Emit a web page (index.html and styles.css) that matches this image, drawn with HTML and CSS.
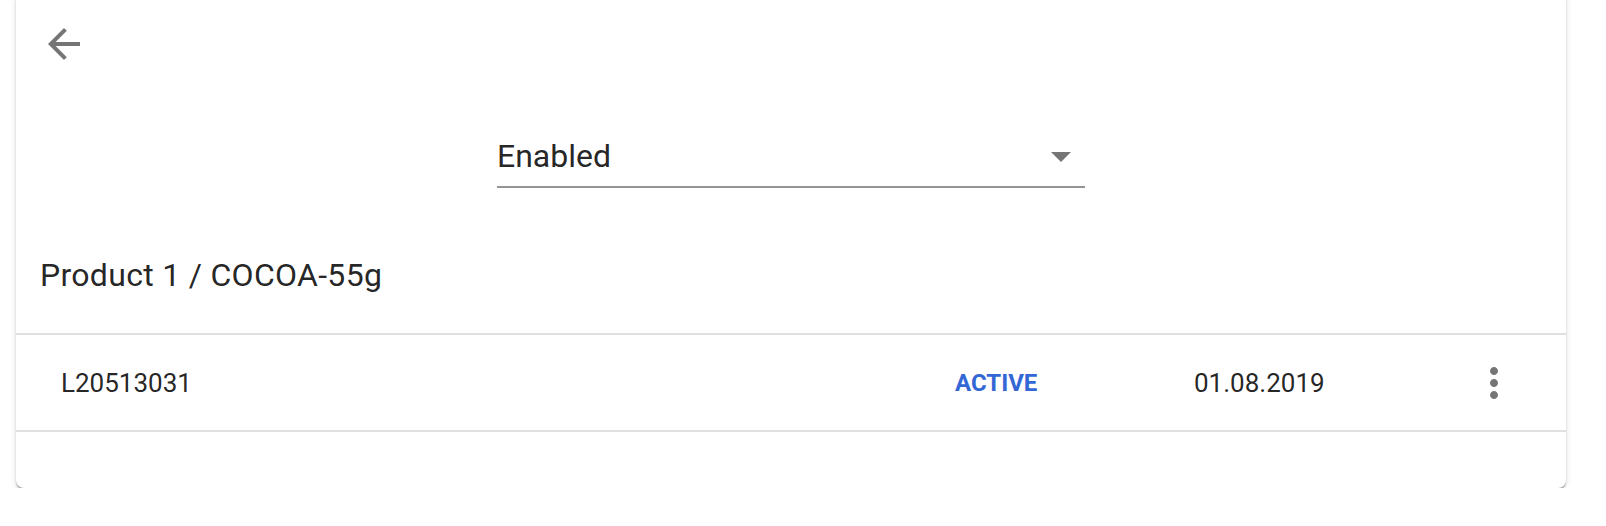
FILE: index.html
```html
<!DOCTYPE html>
<html lang="en">
<head>
<meta charset="utf-8">
<title>Product lots</title>
<link rel="stylesheet" href="styles.css">
</head>
<body>
<div class="page">
  <section class="card">
    <div class="toolbar">
      <button class="icon-btn" aria-label="Back">
        <svg viewBox="0 0 24 24" width="48" height="48"><path d="M20 11H7.83l5.59-5.59L12 4l-8 8 8 8 1.41-1.41L7.83 13H20v-2z"/></svg>
      </button>
    </div>
    <div class="filter">
      <div class="select">
        <span class="select-value">Enabled</span>
        <span class="select-arrow"></span>
      </div>
    </div>
    <h2 class="title">Product 1 / COCOA-55g</h2>
    <div class="table">
      <div class="row">
        <span class="cell">L20513031</span>
        <span class="cell status">ACTIVE</span>
        <span class="cell">01.08.2019</span>
        <button class="icon-btn" aria-label="More">
          <svg viewBox="0 0 24 24" width="48" height="48"><path d="M12 8c1.1 0 2-.9 2-2s-.9-2-2-2-2 .9-2 2 .9 2 2 2zm0 2c-1.1 0-2 .9-2 2s.9 2 2 2 2-.9 2-2-.9-2-2-2zm0 6c-1.1 0-2 .9-2 2s.9 2 2 2 2-.9 2-2-.9-2-2-2z"/></svg>
        </button>
      </div>
    </div>
  </section>
</div>
</body>
</html>
```

FILE: styles.css
```css
* { box-sizing: border-box; }

html, body {
  margin: 0;
  background: #ffffff;
}

body {
  font-family: Roboto, "Liberation Sans", Arial, sans-serif;
  color: rgba(0, 0, 0, 0.87);
  overflow: hidden;
}

.page {
  padding: 0 40px 0 16px;
}

.card {
  margin-top: -8px;
  background: #ffffff;
  border-radius: 8px;
  box-shadow: 0 3px 2px -1px rgba(0, 0, 0, 0.25),
              0 2px 2px 0 rgba(0, 0, 0, 0.14),
              0 1px 6px 0 rgba(0, 0, 0, 0.12);
  padding-top: 28px;
  padding-bottom: 56px;
}

.toolbar {
  display: flex;
  padding-left: 24px;
}

.icon-btn {
  width: 48px;
  height: 48px;
  padding: 0;
  margin: 0;
  border: 0;
  background: transparent;
  display: flex;
  align-items: center;
  justify-content: center;
  fill: rgba(0, 0, 0, 0.54);
}

.icon-btn svg { display: block; }

.filter {
  display: flex;
  justify-content: center;
  margin-top: 64px;
}

.select {
  width: 588px;
  display: flex;
  align-items: center;
  justify-content: space-between;
  padding: 0 14px 6px 0;
  border-bottom: 2px solid #949494;
}

.select-value {
  font-size: 32px;
  line-height: 48px;
}

.select-arrow {
  width: 0;
  height: 0;
  border-left: 10px solid transparent;
  border-right: 10px solid transparent;
  border-top: 10px solid rgba(0, 0, 0, 0.54);
  margin-top: 2px;
}

.title {
  margin: 63px 0 0;
  padding: 0 0 34px 24px;
  font-size: 32px;
  line-height: 48px;
  font-weight: 400;
  letter-spacing: 0.3px;
  border-bottom: 2px solid #e0e0e0;
}

.row {
  display: grid;
  grid-template-columns: 894px 239px 1fr 48px;
  align-items: center;
  height: 97px;
  padding: 0 48px 0 45px;
  border-bottom: 2px solid #e0e0e0;
  font-size: 26px;
}

.status {
  font-size: 24px;
  font-weight: 700;
  color: #3367d6;
}
```
